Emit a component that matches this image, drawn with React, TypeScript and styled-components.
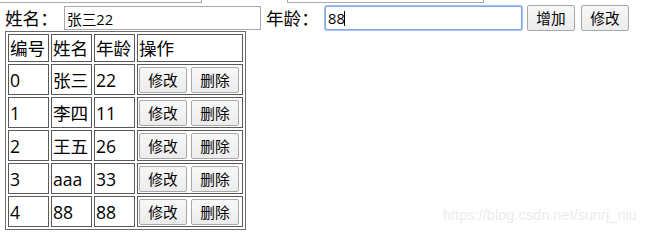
import React from 'react';
import styled, { createGlobalStyle } from 'styled-components';

const Global = createGlobalStyle`
  html, body { margin: 0; padding: 0; background: #fff; }
  body { font-family: "Open Sans", "Noto Sans CJK SC", sans-serif; color: #000; }
`;

const Page = styled.div`
  position: relative;
  width: 662px;
  height: 239px;
  overflow: hidden;
  padding-left: 5px;
  box-sizing: border-box;
`;

const PrevRow = styled.div`
  display: flex;
  height: 3px;
`;

const PrevBox = styled.div<{ $w: number; $ml: number; $noLeft?: boolean }>`
  width: ${(p) => p.$w}px;
  margin-left: ${(p) => p.$ml}px;
  height: 3px;
  box-sizing: border-box;
  border: 1px solid #a9a9a9;
  border-top: none;
  ${(p) => (p.$noLeft ? 'border-left: none;' : '')}
`;

const FormRow = styled.div`
  display: flex;
  align-items: center;
  height: 26px;
  margin-top: 2px;
`;

const Label = styled.span<{ $ml?: number }>`
  display: inline-block;
  width: 53px;
  margin-left: ${(p) => p.$ml ?? 0}px;
  font-size: 17.6px;
  line-height: 26px;
  white-space: nowrap;
`;

const InputWrap = styled.div`
  position: relative;
  display: flex;
`;

const TextInput = styled.input<{ $focused?: boolean }>`
  margin: 0 0 0 6px;
  width: 197px;
  height: 24px;
  box-sizing: border-box;
  border: 1px solid #a9a9a9;
  padding: 0 2px;
  font-family: "Open Sans", "Noto Sans CJK SC", sans-serif;
  font-size: 14.67px;
  color: #000;
  outline: none;
  ${(p) =>
    p.$focused
      ? `border-color: #7ea6ea; box-shadow: 0 0 0 1px #a9c4f2; border-radius: 2px;`
      : ''}
`;

const Caret = styled.span`
  position: absolute;
  left: 25px;
  top: 5px;
  width: 1px;
  height: 15px;
  background: #000;
`;

const Btn = styled.button<{ $ml: number }>`
  margin: 0 0 0 ${(p) => p.$ml}px;
  width: 48px;
  height: 26px;
  box-sizing: border-box;
  padding: 0;
  border: 1px solid #a8a8a8;
  border-radius: 2px;
  background: linear-gradient(#f8f8f8, #ececec);
  font-family: "Noto Sans CJK SC", sans-serif;
  font-size: 14.67px;
  line-height: 24px;
  color: #000;
`;

const Table = styled.table`
  border-collapse: separate;
  border-spacing: 2px;
  border: 1px solid #6b6b6b;
`;

const Cell = styled.td<{ $w: number; $h: number }>`
  width: ${(p) => p.$w}px;
  height: ${(p) => p.$h}px;
  box-sizing: border-box;
  border: 1px solid #5a5a5a;
  padding: 1px;
  font-size: 17.6px;
  line-height: 24px;
  font-weight: normal;
  text-align: left;
  vertical-align: middle;
  white-space: nowrap;
`;

const Actions = styled.div`
  display: flex;
  gap: 4px;
`;

const Watermark = styled.div`
  position: absolute;
  left: 443px;
  top: 207px;
  font-family: "Liberation Sans", Arial, sans-serif;
  font-size: 14.6px;
  color: #ececec;
  white-space: nowrap;
`;

const widths = [41, 41, 41, 106];

const rows = [
  ['0', '张三', '22'],
  ['1', '李四', '11'],
  ['2', '王五', '26'],
  ['3', 'aaa', '33'],
  ['4', '88', '88'],
];

export default function App() {
  return (
    <Page>
      <Global />
      <PrevRow>
        <PrevBox $w={202} $ml={-5} $noLeft />
        <PrevBox $w={197} $ml={85} />
      </PrevRow>
      <FormRow>
        <Label>姓名：</Label>
        <TextInput readOnly value="张三22" />
        <Label $ml={5}>年龄：</Label>
        <InputWrap>
          <TextInput readOnly value="88" $focused />
          <Caret />
        </InputWrap>
        <Btn $ml={5}>增加</Btn>
        <Btn $ml={6}>修改</Btn>
      </FormRow>
      <Table>
        <thead>
          <tr>
            {['编号', '姓名', '年龄', '操作'].map((h, i) => (
              <Cell as="th" key={h} $w={widths[i]} $h={28}>
                {h}
              </Cell>
            ))}
          </tr>
        </thead>
        <tbody>
          {rows.map((r) => (
            <tr key={r[0]}>
              {r.map((c, i) => (
                <Cell key={i} $w={widths[i]} $h={31}>
                  {c}
                </Cell>
              ))}
              <Cell $w={widths[3]} $h={31}>
                <Actions>
                  <Btn $ml={0}>修改</Btn>
                  <Btn $ml={0}>删除</Btn>
                </Actions>
              </Cell>
            </tr>
          ))}
        </tbody>
      </Table>
      <Watermark>https://blog.csdn.net/sunrj_niu</Watermark>
    </Page>
  );
}
